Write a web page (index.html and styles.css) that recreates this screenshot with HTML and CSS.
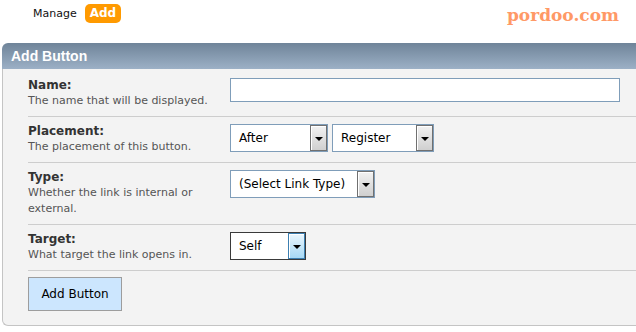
FILE: index.html
```html
<!DOCTYPE html>
<html>
<head>
    <title>Add Button</title>
    <link rel="stylesheet" href="styles.css">
</head>
<body>
    <div class="topbar">
        <div class="tabs">
            <span class="tab">Manage</span>
            <span class="tab tab-active">Add</span>
        </div>
        <div class="brand">pordoo.com</div>
    </div>

    <div class="panel">
        <div class="panel-head">Add Button</div>
        <div class="panel-body">
            <div class="row">
                <div class="label">
                    <strong>Name:</strong>
                    <div class="desc">The name that will be displayed.</div>
                </div>
                <div class="field">
                    <div class="textbox"></div>
                </div>
            </div>

            <div class="row">
                <div class="label">
                    <strong>Placement:</strong>
                    <div class="desc">The placement of this button.</div>
                </div>
                <div class="field">
                    <div class="select w-after">
                        <span class="value">After</span>
                        <span class="arrow"><i></i></span>
                    </div>
                    <div class="select w-register">
                        <span class="value">Register</span>
                        <span class="arrow"><i></i></span>
                    </div>
                </div>
            </div>

            <div class="row">
                <div class="label">
                    <strong>Type:</strong>
                    <div class="desc">Whether the link is internal or external.</div>
                </div>
                <div class="field">
                    <div class="select w-type">
                        <span class="value">(Select Link Type)</span>
                        <span class="arrow"><i></i></span>
                    </div>
                </div>
            </div>

            <div class="row">
                <div class="label">
                    <strong>Target:</strong>
                    <div class="desc">What target the link opens in.</div>
                </div>
                <div class="field">
                    <div class="select select-hover w-self">
                        <span class="value">Self</span>
                        <span class="arrow"><i></i></span>
                    </div>
                </div>
            </div>

            <div class="actions">
                <button class="btn">Add Button</button>
            </div>
        </div>
    </div>
</body>
</html>
```

FILE: styles.css
```css
body {
    margin: 0;
    font-family: "DejaVu Sans", Verdana, sans-serif;
    font-size: 11px;
    color: #000;
    background: #fff;
    overflow: hidden;
}
.topbar {
    height: 43px;
    display: flex;
    justify-content: space-between;
    align-items: flex-start;
}
.tabs {
    display: flex;
    align-items: center;
    padding: 4px 0 0 33px;
}
.tab {
    color: #111;
    font-size: 11px;
}
.tab-active {
    margin-left: 8px;
    background: #ff9a00;
    color: #fff;
    font-weight: bold;
    font-size: 12px;
    border-radius: 5px;
    padding: 2px 5px 3px;
    line-height: 14px;
}
.brand {
    font-family: "DejaVu Serif", Georgia, serif;
    font-weight: bold;
    font-size: 17px;
    color: #ff9966;
    padding: 5px 17px 0 0;
}
.panel {
    margin: 0 -20px 0 2px;
}
.panel-head {
    height: 26px;
    line-height: 27px;
    padding-left: 9px;
    border-radius: 6px 0 0 0;
    background: linear-gradient(#6f8499, #9cb0c6);
    color: #fff;
    font-family: "Liberation Sans", Arial, sans-serif;
    font-weight: bold;
    font-size: 14px;
}
.panel-body {
    background: #f3f3f3;
    border-left: 1px solid #c4c4c4;
    border-bottom: 1px solid #c4c4c4;
    border-radius: 0 0 0 6px;
    padding: 2px 0 14px 25px;
}
.row {
    display: flex;
    padding: 7px 0;
    border-bottom: 1px solid #cdcdcd;
}
.label {
    width: 202px;
    flex-shrink: 0;
}
.label strong {
    display: block;
    font-size: 12px;
    line-height: 15px;
    color: #333;
}
.desc {
    line-height: 16px;
    color: #555;
}
.field {
    display: flex;
    gap: 4px;
    align-items: flex-start;
}
.textbox {
    width: 388px;
    height: 22px;
    background: #fff;
    border: 1px solid #7f9db9;
}
.select {
    display: flex;
    height: 26px;
    background: #fff;
    border: 1px solid #7f9db9;
    font-size: 12px;
}
.select .value {
    flex: 1;
    padding-left: 8px;
    line-height: 26px;
    white-space: nowrap;
}
.select .arrow {
    width: 15px;
    border: 1px solid #707070;
    box-shadow: inset 1px 1px 0 #fff;
    background: linear-gradient(#f2f2f2, #cfcfcf);
    display: flex;
    justify-content: center;
    align-items: center;
}
.select .arrow i {
    margin-top: 2px;
    width: 0;
    height: 0;
    border-left: 4px solid transparent;
    border-right: 4px solid transparent;
    border-top: 4px solid #000;
}
.select-hover {
    border-color: #3a3a3a;
}
.select-hover .arrow {
    border-color: #3c7fb1;
    background: linear-gradient(#eaf6fd, #a7d9f5);
}
.w-after { width: 96px; }
.w-register { width: 100px; }
.w-type { width: 143px; }
.w-self { width: 74px; }
.actions {
    padding-top: 6px;
}
.btn {
    width: 94px;
    height: 34px;
    background: #cce6fe;
    border: 1px solid #9d9d9d;
    font-family: "DejaVu Sans", Verdana, sans-serif;
    font-size: 12px;
    color: #000;
    padding: 0;
}
```
